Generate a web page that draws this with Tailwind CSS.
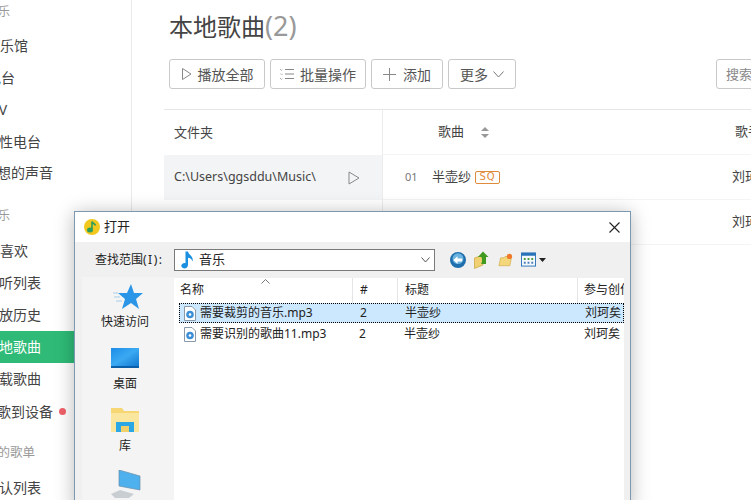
<!DOCTYPE html>
<html lang="zh-CN">
<head>
    <meta charset="UTF-8">
    <title>本地歌曲</title>
    <script src="https://cdn.jsdelivr.net/npm/@tailwindcss/browser@4"></script>
</head>
<body class="bg-white">
<div class="relative flex w-[751px] h-[500px] overflow-hidden bg-white text-[#444] font-['Noto_Sans','Noto_Sans_CJK_SC',sans-serif]">

    <!-- Sidebar -->
    <aside class="w-[132px] h-[500px] shrink-0 border-r border-[#e9e9e9] text-[14px] overflow-hidden">
        <div class="h-[30px] pt-[3px] -ml-[14px] text-[12px] leading-[18px] text-[#999]">音乐</div>
        <div class="h-[32px] leading-[32px] -ml-[14px]">音乐馆</div>
        <div class="h-[32px] leading-[32px] -ml-[13px]">电台</div>
        <div class="h-[32px] leading-[32px] -ml-[14px]">MV</div>
        <div class="h-[32px] leading-[32px] -ml-[15px]">个性电台</div>
        <div class="h-[32px] leading-[30px] -ml-[17px]">你想的声音</div>
        <div class="h-[45px] pt-[17px] leading-[18px] text-[12px] text-[#999] -ml-[14px]">音乐</div>
        <div class="h-[32px] leading-[32px] -ml-[14px]">我喜欢</div>
        <div class="h-[32px] leading-[32px] -ml-[15px]">试听列表</div>
        <div class="h-[32px] leading-[32px] -ml-[15px]">播放历史</div>
        <div class="h-[32px] leading-[32px] bg-[#2fbb77] text-white"><span class="block -ml-[15px]">本地歌曲</span></div>
        <div class="h-[32px] leading-[32px] -ml-[15px]">下载歌曲</div>
        <div class="flex items-center h-[32px] -ml-[17px]"><span>传歌到设备</span><span class="w-[7px] h-[7px] ml-[6px] rounded-full bg-[#f0616a]"></span></div>
        <div class="h-[42px] pt-[15px] leading-[22px] text-[12.5px] text-[#999] -ml-[15px]">我的歌单</div>
        <div class="h-[32px] leading-[32px] mt-[3px] -ml-[15px]">默认列表</div>
    </aside>

    <!-- Main -->
    <main class="flex-1 min-w-0 pl-[32px] overflow-hidden">
        <div class="pl-[5px] h-[59px] pt-[8px] text-[24px] leading-[36px] text-[#444] whitespace-nowrap">本地歌曲<span class="text-[27px] text-[#999]">(2)</span></div>

        <div class="flex items-center h-[50px] pb-[20px] pl-[5px] box-border text-[14px] text-[#555] whitespace-nowrap">
            <div class="flex shrink-0 items-center justify-center gap-[5px] w-[96px] h-[30px] border border-[#c9c9c9] rounded-[3px]">
                <svg width="12" height="14" viewBox="0 0 12 14" fill="none" stroke="#888"><path d="M1.5 1.5 L10 7 L1.5 12.5 Z"/></svg>
                <span>播放全部</span>
            </div>
            <div class="flex shrink-0 items-center justify-center gap-[6px] w-[96px] h-[30px] ml-[5px] border border-[#c9c9c9] rounded-[3px]">
                <svg width="14" height="12" viewBox="0 0 14 12" fill="none" stroke="#888"><path d="M5 1.5H14M5 6H14M5 10.5H14"/><path d="M0 1l1.5 1.5L3 1M0 5.5L1.5 7 3 5.5M0 10l1.5 1.5L3 10" stroke-dasharray="1 1"/></svg>
                <span>批量操作</span>
            </div>
            <div class="flex shrink-0 items-center justify-center gap-[7px] w-[72px] h-[30px] ml-[5px] border border-[#c9c9c9] rounded-[3px]">
                <svg width="13" height="13" viewBox="0 0 13 13" fill="none" stroke="#888"><path d="M6.5 0V13M0 6.5H13"/></svg>
                <span>添加</span>
            </div>
            <div class="flex shrink-0 items-center justify-center gap-[5px] w-[68px] h-[30px] ml-[5px] border border-[#c9c9c9] rounded-[3px]">
                <span>更多</span>
                <svg width="11" height="7" viewBox="0 0 11 7" fill="none" stroke="#777"><path d="M0.5 0.5 L5.5 6 L10.5 0.5"/></svg>
            </div>
            <div class="shrink-0 w-[60px] h-[30px] ml-[200px] pl-[9px] leading-[28px] border border-[#c9c9c9] rounded-[3px] text-[13px] text-[#888] overflow-hidden">搜索本地歌曲</div>
        </div>

        <!-- Table -->
        <div class="flex border-t border-[#e6e6e6] text-[13px] whitespace-nowrap">
            <div class="w-[219px] shrink-0 border-r border-[#ececec]">
                <div class="h-[45px] pl-[10px] leading-[45px]">文件夹</div>
                <div class="flex items-center justify-between h-[45px] pl-[10px] pr-[22px] bg-[#f3f4f5]">
                    <span class="text-[12.5px]">C:\Users\ggsddu\Music\</span>
                    <svg width="12" height="14" viewBox="0 0 12 14" fill="none" stroke="#888"><path d="M1 1 L11 7 L1 13 Z"/></svg>
                </div>
            </div>
            <div class="flex-1 min-w-0">
                <div class="flex items-center h-[45px] pl-[55px] border-b border-[#f4f4f4]">
                    <span class="shrink-0">歌曲</span>
                    <svg class="ml-[17px] shrink-0" width="8" height="11" viewBox="0 0 8 11" fill="#999"><path d="M4 0 L8 4 H0 Z M4 11 L0 7 H8 Z"/></svg>
                    <span class="ml-[246px] shrink-0">歌手</span>
                </div>
                <div class="flex items-center h-[45px] border-b border-[#f4f4f4]">
                    <span class="w-[49px] pl-[22px] text-[11px] text-[#777] shrink-0">01</span>
                    <span class="shrink-0">半壶纱</span>
                    <span class="flex shrink-0 items-center justify-center w-[25px] h-[13px] ml-[4px] border border-[#e08a3c] rounded-[2px] font-['DejaVu_Sans',sans-serif] text-[10px] leading-none tracking-[1px] text-[#e08a3c]">SQ</span>
                    <span class="ml-[232px] shrink-0">刘珂矣</span>
                </div>
                <div class="flex items-center h-[45px] pl-[349px] border-b border-[#f4f4f4]">
                    <span class="shrink-0">刘珂矣</span>
                </div>
            </div>
        </div>
    </main>

    <!-- Open file dialog -->
    <div class="absolute left-[74px] top-[211px] flex flex-col w-[557px] h-[300px] bg-[#f0f0f0] border border-[#7d99b2] shadow-[0_2px_18px_rgba(0,0,0,0.28)] text-[12px] text-[#222] whitespace-nowrap">
        <div class="flex items-center h-[30px] pl-[9px] pr-[10px] bg-white">
            <svg width="16" height="16" viewBox="0 0 16 16">
                <circle cx="8" cy="8" r="8" fill="#f2c81e"/>
                <path d="M8 2.5 C8.5 4.5 11 4.5 11.5 6.5 M8 2.5V10" fill="none" stroke="#2f9e5b" stroke-width="1.6"/>
                <ellipse cx="6" cy="11" rx="3" ry="2.5" fill="#2f9e5b"/>
            </svg>
            <span class="ml-[4px] text-[13px]">打开</span>
            <svg class="ml-auto" width="11" height="11" viewBox="0 0 11 11" fill="none" stroke="#222" stroke-width="1.1"><path d="M0.5 0.5 L10.5 10.5 M10.5 0.5 L0.5 10.5"/></svg>
        </div>

        <div class="flex items-center h-[35px] pl-[20px]">
            <span class="w-[79px]">查找范围<span class="tracking-[1.5px]">(I):</span></span>
            <div class="flex items-center w-[261px] h-[22px] pl-[6px] pr-[3px] bg-white border border-[#7a7a7a]">
                <svg width="13" height="18" viewBox="0 0 13 18"><path d="M4.5 0.5 H7 C7.5 4 13 5 11.5 10.5 C10.8 8 9 7 7 6.8 V14 C7 16.2 4.8 17.8 2.5 17.3 C0.3 16.8 -0.3 14.6 1 13.2 C2.2 12 3.5 11.8 4.5 12.2 Z" fill="#1b8fe0"/></svg>
                <span class="ml-[5px] text-[13px]">音乐</span>
                <svg class="ml-auto mr-[1px]" width="9" height="6" viewBox="0 0 9 6" fill="none" stroke="#555"><path d="M0.5 0.5 L4.5 5 L8.5 0.5"/></svg>
            </div>
            <svg class="ml-[15px]" width="16" height="16" viewBox="0 0 17 17">
                <circle cx="8.5" cy="8.5" r="8.5" fill="#1f6fae"/>
                <circle cx="8.5" cy="7" r="5.8" fill="#6db3e0"/>
                <path d="M3.5 8.5 L8 4.5 V7 H13 V10 H8 V12.5 Z" fill="#fff"/>
            </svg>
            <svg class="ml-[8px]" width="15" height="18" viewBox="0 0 15 18">
                <path d="M0.5 7 L9 4 V14 L0.5 17.5 Z" fill="#f0d070" stroke="#c9a43e" stroke-width="0.7"/>
                <path d="M9 0.5 L14.5 6 H12 V13 H7 C8.5 11 8 8 7.5 6 H4 Z" fill="#3f9a1f"/>
            </svg>
            <svg class="ml-[9px]" width="15" height="14" viewBox="0 0 17 15">
                <path d="M1 14 L3 5 H7 L8 3.5 H12 L15 6 L13.5 14 Z" fill="#f3d77a" stroke="#cda846" stroke-width="0.7"/>
                <circle cx="13" cy="3.5" r="3" fill="#f07a2a"/>
            </svg>
            <svg class="ml-[8px]" width="15" height="15" viewBox="0 0 16 15">
                <rect x="0.5" y="0.5" width="15" height="14" fill="#f4f8fc" stroke="#2a72b8"/>
                <rect x="0.5" y="0.5" width="15" height="3" fill="#2a72b8"/>
                <path d="M3 6h2v2H3zM7 6h2v2H7zM11 6h2v2h-2z" fill="#4d9b3a"/>
                <path d="M3 10h2v2H3zM7 10h2v2H7zM11 10h2v2h-2z" fill="#4a7fb8"/>
            </svg>
            <svg class="ml-[3px]" width="7" height="4" viewBox="0 0 7 4" fill="#222"><path d="M0 0 H7 L3.5 4 Z"/></svg>
        </div>

        <div class="flex flex-1 min-h-0 pl-[7px]">
            <!-- Places bar -->
            <div class="flex flex-col items-center w-[92px] shrink-0 pt-[6px] pr-[6px] text-[12px] bg-[#f4f4f4]">
                <svg class="ml-[6px]" width="30" height="28" viewBox="0 0 30 28"><path d="M18 1 L21 10 L30 10 L23 16 L26 26 L18 20 L9 26 L12 16 L5 10 L14 10 Z" fill="#2b96e8"/><path d="M0 10H5M1 14H7M3 18H9" stroke="#a8cde8"/></svg>
                <span class="mt-[1px] leading-[20px]">快速访问</span>
                <div class="w-[28px] h-[20px] mt-[16px] bg-gradient-to-br from-[#1a8de8] via-[#3ba9f2] to-[#0f78d0] border-b-2 border-[#0b5ea8]"></div>
                <span class="mt-[6px] leading-[20px]">桌面</span>
                <svg class="mt-[14px]" width="28" height="24" viewBox="0 0 28 24">
                    <path d="M0 0 H11 L13 3 H28 V24 H0 Z" fill="#f6d774"/>
                    <path d="M0 5 H28 V24 H0 Z" fill="#fbe6a0"/>
                    <path d="M5 24 V14 H23 V24 H18 V18 H10 V24 Z" fill="#2ba7e6"/>
                    <rect x="10" y="18" width="8" height="6" fill="#f1cf6a"/>
                </svg>
                <span class="mt-[4px] leading-[20px]">库</span>
                <svg class="mt-[14px] shrink-0" width="31" height="28" viewBox="0 0 31 28">
                    <path d="M9 0 L30 6 V20 L9 16 Z" fill="#4fb0ee" stroke="#6a8ea8" stroke-width="0.7"/>
                    <path d="M1 24 L10 20 L24 24 L19 28 H5 Z" fill="#c9ced3"/>
                </svg>
            </div>

            <!-- File list -->
            <div class="w-[450px] mt-[1px] bg-white overflow-hidden">
                <div class="relative grid grid-cols-[179px_45px_180px_46px] h-[25px] leading-[24px]">
                    <span class="pl-[6px] border-r border-[#e5e5e5]">名称</span>
                    <span class="pl-[7px] border-r border-[#e5e5e5]">#</span>
                    <span class="pl-[7px] border-r border-[#e5e5e5]">标题</span>
                    <span class="pl-[6px] overflow-hidden">参与创作</span>
                    <svg class="absolute left-[87px] top-[1px]" width="9" height="5" viewBox="0 0 9 5" fill="none" stroke="#777"><path d="M0.5 4.5 L4.5 0.5 L8.5 4.5"/></svg>
                </div>
                <div class="grid grid-cols-[174px_45px_180px_46px] items-center h-[20px] ml-[5px] bg-[#cce8ff] border border-dotted border-black">
                    <span class="flex items-center pl-[4px]">
                        <svg width="12" height="15" viewBox="0 0 12 15"><path d="M0.5 0.5 H8 L11.5 4 V14.5 H0.5 Z" fill="#fff" stroke="#8a9aa8"/><circle cx="6" cy="8.5" r="3.8" fill="#3d8fd6"/><circle cx="6" cy="8.5" r="1.3" fill="#fff"/></svg>
                        <span class="ml-[4px]">需要裁剪的音乐.mp3</span>
                    </span>
                    <span class="pl-[6px]">2</span>
                    <span class="pl-[6px]">半壶纱</span>
                    <span class="pl-[6px]">刘珂矣</span>
                </div>
                <div class="grid grid-cols-[174px_45px_180px_46px] items-center h-[22px] ml-[5px]">
                    <span class="flex items-center pl-[5px]">
                        <svg width="12" height="15" viewBox="0 0 12 15"><path d="M0.5 0.5 H8 L11.5 4 V14.5 H0.5 Z" fill="#fff" stroke="#8a9aa8"/><circle cx="6" cy="8.5" r="3.8" fill="#3d8fd6"/><circle cx="6" cy="8.5" r="1.3" fill="#fff"/></svg>
                        <span class="ml-[4px]">需要识别的歌曲11.mp3</span>
                    </span>
                    <span class="pl-[6px]">2</span>
                    <span class="pl-[6px]">半壶纱</span>
                    <span class="pl-[6px]">刘珂矣</span>
                </div>
            </div>
        </div>
    </div>
</div>
</body>
</html>
